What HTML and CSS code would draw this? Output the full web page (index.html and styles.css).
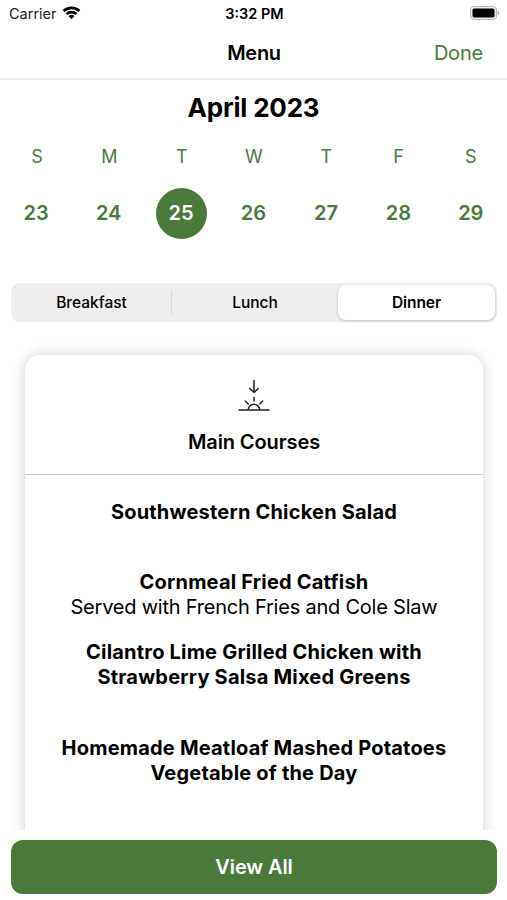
FILE: index.html
```html
<!DOCTYPE html>
<html lang="en">
<head>
<meta charset="utf-8">
<title>Menu</title>
<link rel="stylesheet" href="styles.css">
</head>
<body>
<div class="screen">
  <div class="status">
    <div class="carrier"><span class="carrier-name">Carrier</span>
      <svg class="wifi" viewBox="0 0 18 14" width="19" height="15"><path d="M.6 4.700a12 12 0 0 1 16.8 0L15.6 6.600a9.400 9.400 0 0 0-13.2 0zM3.400 7.600a8 8 0 0 1 11.2 0L12.8 9.400a5.400 5.400 0 0 0-7.600 0zM6.200 10.400a4 4 0 0 1 5.600 0L9 13.300z"/></svg>
    </div>
    <span class="time">3:32 PM</span>
    <svg class="battery" viewBox="0 0 31 14" width="31" height="14"><rect x="1.500" y=".5" width="26" height="13" rx="3.500" fill="#eee" stroke="#b5b5b5"/><rect x="3.500" y="2.500" width="22" height="9" rx="1.800"/><path d="M28.700 4.700c2 .8 2 3.800 0 4.600z" fill="#aaa"/></svg>
  </div>
  <header class="nav"><span></span><h1 class="title">Menu</h1><span class="done">Done</span></header>
  <h2 class="month">April 2023</h2>
  <div class="week">
    <span>S</span><span>M</span><span>T</span><span>W</span><span>T</span><span>F</span><span>S</span>
  </div>
  <div class="dates">
    <span>23</span><span>24</span><span class="selected">25</span><span>26</span><span>27</span><span>28</span><span>29</span>
  </div>
  <div class="segments"><span class="segment">Breakfast</span><i class="divider"></i><span class="segment">Lunch</span><span class="segment active">Dinner</span></div>
  <main class="content">
    <section class="card">
      <div class="card-head">
        <svg class="sunset" viewBox="0 0 32 34" width="32" height="34"><path d="M16 1.500v12M11.800 9.500 16 13.500l4.200-4M1 31h30M10.300 31v-.5a5.700 5.200 0 0 1 11.400 0v.5M16 18.500v3.500M7.300 22l2.900 3M24.700 22l-2.900 3"/></svg>
        <h3 class="course">Main Courses</h3>
      </div>
      <div class="dish"><b>Southwestern Chicken Salad</b></div>
      <div class="dish"><b>Cornmeal Fried Catfish</b><span class="detail">Served with French Fries and Cole Slaw</span></div>
      <div class="dish"><b>Cilantro Lime Grilled Chicken with</b><b>Strawberry Salsa Mixed Greens</b></div>
      <div class="dish"><b>Homemade Meatloaf Mashed Potatoes</b><b>Vegetable of the Day</b></div>
    </section>
  </main>
  <footer class="footer"><div class="view-all">View All</div></footer>
</div>
</body>
</html>
```
FILE: styles.css
```css
* { box-sizing: border-box; }
body { margin: 0; background: #fff; color: #000; font-family: Inter, "Liberation Sans", sans-serif; }
h1, h2, h3 { margin: 0; font-weight: 600; }
b { font-weight: 700; letter-spacing: .2px; }
.screen { width: 507px; height: 900px; display: flex; flex-direction: column; overflow: hidden; }
.status { height: 27px; flex: none; display: grid; grid-template-columns: 1fr auto 1fr; align-items: center; padding: 0 7px 0 9px; }
.carrier { display: flex; align-items: center; gap: 5px; font-size: 14.5px; color: #222; }
.wifi { fill: #000; margin-top: -2px; }
.time { font-size: 14.5px; font-weight: 600; }
.battery { justify-self: end; margin-top: -1px; }
.nav { height: 53px; flex: none; display: grid; grid-template-columns: 1fr auto 1fr; align-items: center; padding: 1px 24px 0 25px; border-bottom: 2px solid #ededed; }
.title { font-size: 20px; letter-spacing: -.3px; }
.done { justify-self: end; font-size: 20px; letter-spacing: -.2px; color: #497a3b; }
.month { height: 56px; line-height: 56px; flex: none; text-align: center; font-size: 26px; font-weight: 700; letter-spacing: -.2px; }
.week, .dates { display: grid; grid-template-columns: repeat(7, 1fr); flex: none; color: #497a3b; text-align: center; align-items: center; justify-items: center; padding-left: 1px; }
.week { height: 41px; font-size: 18px; }
.dates { height: 72px; font-size: 20px; font-weight: 600; padding-left: 0; }
.dates span { width: 51px; height: 51px; line-height: 51px; }
.dates .selected { border-radius: 50%; background: #497a3b; color: #fff; }
.segments { height: 39px; flex: none; margin: 34px 10px 0 11px; background: #eee; border-radius: 9px; display: grid; grid-template-columns: 159px 1px 1fr 157px; align-items: center; padding: 2px 2px 2px 1px; font-size: 15.5px; font-weight: 500; }
.segment { height: 35px; line-height: 36px; text-align: center; }
.active { background: #fff; border-radius: 8px; box-shadow: 0 1px 3px #0003; font-weight: 600; letter-spacing: -.1px; }
.divider { width: 1px; height: 24px; background: #d8d8d8; }
.content { flex: 1; min-height: 0; padding: 33px 24px 0 25px; overflow: hidden; }
.card { height: 600px; border-radius: 15px; box-shadow: 0 0 14px #00000030; }
.card-head { height: 120px; border-bottom: 1px solid #c4c4c4; display: flex; flex-direction: column; align-items: center; padding-top: 24px; }
.sunset { fill: none; stroke: #222; stroke-width: 1.5; stroke-linecap: round; stroke-linejoin: round; }
.course { margin-top: 17px; line-height: 25px; font-size: 20px; letter-spacing: -.1px; }
.dish { height: 70px; display: flex; flex-direction: column; align-items: center; font-size: 20px; line-height: 25px; white-space: nowrap; }
.detail { letter-spacing: -.22px; }
.card-head + .dish { margin-top: 25px; }
.dish:last-child { margin-top: 26px; }
.footer { height: 70px; flex: none; padding: 10px 10px 6px 11px; }
.view-all { height: 54px; line-height: 55px; border-radius: 12px; background: #497a3b; color: #fff; text-align: center; font-size: 20px; font-weight: 600; letter-spacing: -.1px; }
```
